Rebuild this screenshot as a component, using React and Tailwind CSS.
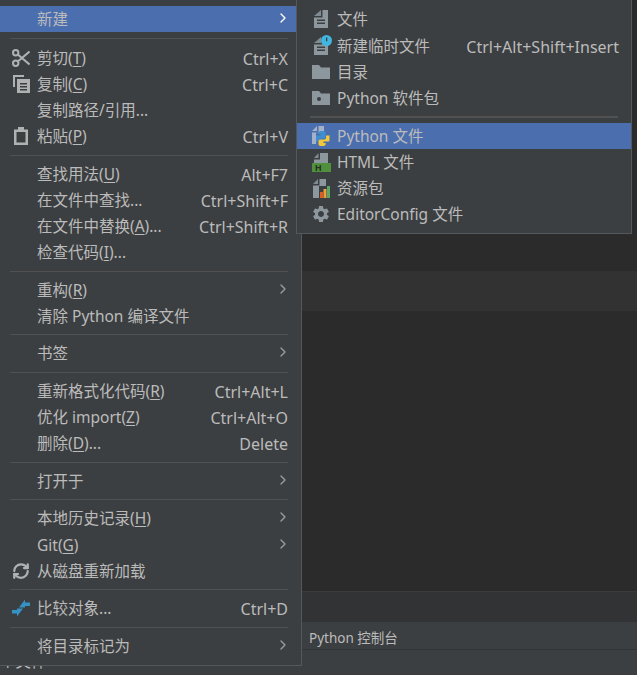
import React from "react";
import { ChevronRight, RefreshCw } from "lucide-react";
import { MdSettings } from "react-icons/md";

const font = `"Noto Sans", "Noto Sans CJK SC", sans-serif`;

const ScissorsIcon = () => (
  <svg width="18" height="18" viewBox="0 0 18 18" fill="none" stroke="#afb1b3" strokeWidth="2">
    <circle cx="3.7" cy="3.7" r="2.7" />
    <circle cx="3.7" cy="14.3" r="2.7" />
    <path d="M5.800 5.400 17.500 15.500M5.800 12.600 17.500 2.500" />
  </svg>
);

const CopyIcon = () => (
  <svg width="17" height="18" viewBox="0 0 17 18">
    <path d="M0 0h11v2H2v10H0z" fill="#afb1b3" />
    <path d="M4 4h13v14H4z" fill="#afb1b3" />
    <path d="M7 8h7v1.500H7zM7 11h7v1.500H7zM7 14h7v1.500H7z" fill="#3c3f41" />
  </svg>
);

const PasteIcon = () => (
  <svg width="14" height="18" viewBox="0 0 14 18">
    <path fillRule="evenodd" d="M0 2.500h4V0h6v2.500h4V18H0zM2.500 5v10.500h9V5z" fill="#afb1b3" />
  </svg>
);

const CompareIcon = () => (
  <svg width="18" height="18" viewBox="0 0 18 18" fill="#3592c4">
    <path d="M7 8.500 13 .5V3.500H18V7H13V8.500Z" />
    <path d="M11 9.500 5 17.500V14.500H0V11H5V9.500Z" />
  </svg>
);

const FileIcon = () => (
  <svg width="14" height="18" viewBox="0 0 14 18">
    <path d="M7 0v6H0z" fill="#7f8b91" />
    <path d="M8.500 0H14v18H0V7.500h8.500z" fill="#8d979e" />
    <path d="M3 9.500h8V11H3zM3 12.500h8V14H3z" fill="#3c3f41" />
  </svg>
);

const TempFileIcon = () => (
  <span className="relative flex">
    <FileIcon />
    <svg className="absolute left-[7px] top-[-2px]" width="11" height="11" viewBox="0 0 11 11">
      <circle cx="5.500" cy="5.500" r="5.500" fill="#40b6e0" />
      <path d="M5 2.500h1.300v3.800H5z" fill="#3c3f41" />
    </svg>
  </span>
);

const FolderIcon = ({ dot }) => (
  <svg width="18" height="14" viewBox="0 0 18 14">
    <path d="M0 0h7l2 2.500h9V14H0z" fill="#8d979e" />
    {dot && <circle cx="7" cy="8" r="2" fill="#3c3f41" />}
  </svg>
);

const PythonIcon = () => (
  <svg width="18" height="20" viewBox="0 0 18 20">
    <path d="M5 0v5H0z" fill="#a3b2c9" />
    <path d="M6.500 0H12v6H6a2 2 0 0 0-2 2v10H0V6.500h6.500z" fill="#a3b2c9" />
    <path d="M4 17V9.500h4.500V8H6.500V6.800C6.500 5.500 8 5 10 5s3.500.500 3.500 1.800V11c0 1-.8 1.500-1.800 1.500H8c-1 0-1.600.700-1.600 1.700V15H5z" fill="#3f8fd0" />
    <path d="M17.500 9.500V14c0 1-.7 1.500-1.500 1.500h-4.500V17h2.200v1.200c0 1.300-1.700 1.800-3.700 1.800s-3.500-.500-3.500-1.800V15c0-1 .8-1.500 1.800-1.500h4c1.100 0 1.700-.700 1.700-1.700V9.500z" fill="#f2c83a" />
  </svg>
);

const HtmlIcon = () => (
  <svg width="19" height="19" viewBox="0 0 19 19">
    <path d="M6.500 0v5H2z" fill="#7f8b91" />
    <path d="M8 0H16v10H2V6.500h6z" fill="#8d979e" />
    <path d="M0 10h19v9H0z" fill="#4f8f3e" />
    <text x="3" y="18" fontSize="9" fontWeight="700" fontFamily="Liberation Sans" fill="#22301f">H</text>
  </svg>
);

const ResourceIcon = () => (
  <svg width="17" height="19" viewBox="0 0 17 19">
    <path d="M5 0v5H0z" fill="#7f8b91" />
    <path d="M6.500 0H13v7H6v12H0V6.500h6.500z" fill="#8d979e" />
    <path d="M7 13h3v6H7z" fill="#e05a24" />
    <path d="M10.500 10h3v9h-3z" fill="#e8a33d" />
    <path d="M14 7h3v12h-3z" fill="#59a869" />
  </svg>
);

const GearIcon = () => <MdSettings size={20} color="#8d979e" />;

const u = (s) => <u className="underline underline-offset-2">{s}</u>;

const mainMenu = [
  { label: "新建", arrow: true, active: true },
  { sep: "h-[13px]" },
  { icon: <ScissorsIcon />, label: <>剪切({u("T")})</>, shortcut: "Ctrl+X" },
  { icon: <CopyIcon />, label: <>复制({u("C")})</>, shortcut: "Ctrl+C" },
  { label: "复制路径/引用..." },
  { icon: <PasteIcon />, label: <>粘贴({u("P")})</>, shortcut: "Ctrl+V" },
  { sep: "h-[12px]" },
  { label: <>查找用法({u("U")})</>, shortcut: "Alt+F7" },
  { label: "在文件中查找...", shortcut: "Ctrl+Shift+F" },
  { label: <>在文件中替换({u("A")})...</>, shortcut: "Ctrl+Shift+R" },
  { label: <>检查代码({u("I")})...</> },
  { sep: "h-[12px]" },
  { label: <>重构({u("R")})</>, arrow: true },
  { label: "清除 Python 编译文件" },
  { sep: "h-[11px]" },
  { label: "书签", arrow: true },
  { sep: "h-[12px]" },
  { label: <>重新格式化代码({u("R")})</>, shortcut: "Ctrl+Alt+L" },
  { label: <>优化 import({u("Z")})</>, shortcut: "Ctrl+Alt+O" },
  { label: <>删除({u("D")})...</>, shortcut: "Delete" },
  { sep: "h-[12px]" },
  { label: "打开于", arrow: true },
  { sep: "h-[11px]" },
  { label: <>本地历史记录({u("H")})</>, arrow: true },
  { label: <>Git({u("G")})</>, arrow: true, tall: true },
  { icon: <RefreshCw size={18} color="#afb1b3" strokeWidth={3} />, label: "从磁盘重新加载" },
  { sep: "h-[11px]" },
  { icon: <CompareIcon />, label: "比较对象...", shortcut: "Ctrl+D" },
  { sep: "h-[12px]" },
  { label: "将目录标记为", arrow: true },
];

const subMenu = [
  { icon: <FileIcon />, label: "文件" },
  { icon: <TempFileIcon />, label: "新建临时文件", shortcut: "Ctrl+Alt+Shift+Insert", tall: true },
  { icon: <FolderIcon />, label: "目录" },
  { icon: <FolderIcon dot />, label: "Python 软件包" },
  { sep: "h-[12px]" },
  { icon: <PythonIcon />, label: "Python 文件", active: true },
  { icon: <HtmlIcon />, label: "HTML 文件" },
  { icon: <ResourceIcon />, label: "资源包" },
  { icon: <GearIcon />, label: "EditorConfig 文件" },
];

const Row = ({ item, slot, rowPad }) => (
  <div
    className={`flex items-center ${item.tall ? "h-[27px]" : "h-[26px]"} ${rowPad} ${
      item.active ? "bg-[#4b6eaf]" : ""
    }`}
  >
    {slot(item.icon)}
    <span className="flex-1 whitespace-nowrap pt-[2px]">{item.label}</span>
    {item.shortcut && <span className="whitespace-nowrap pt-[2px] text-[16px]">{item.shortcut}</span>}
    {item.arrow && (
      <ChevronRight
        size={16}
        strokeWidth={2}
        className={`-mr-[3px] -mt-[2px] ${item.active ? "text-white" : "text-[#9a9da0]"}`}
      />
    )}
  </div>
);

const mainSlot = (icon) => (
  <span className="flex h-full w-[37px] shrink-0 items-center justify-center pl-[5px]">{icon}</span>
);

const subSlot = (icon) => (
  <span className="flex h-full w-[40px] shrink-0 items-center justify-center pl-[8px]">{icon}</span>
);

export default function App() {
  return (
    <div
      className="relative flex h-[675px] w-[637px] flex-col overflow-hidden bg-[#3c3f41] text-[15.5px] text-[#bbbbbb]"
      style={{ fontFamily: font }}
    >
      {/* ide behind the menus */}
      <div className="h-[591px] shrink-0 bg-[#2b2b2b] pt-[271px]">
        <div className="h-[40px] bg-[#323232]" />
      </div>
      <div className="h-[31px] shrink-0 border-t border-[#393b3d] bg-[#313335]" />
      <div className="flex h-[28px] shrink-0 items-center border-b border-[#323537] pl-[309px] pt-[5px] text-[13.5px]">
        Python 控制台
      </div>
      <div className="shrink-0 leading-[22px]">个文件</div>

      {/* main context menu */}
      <div className="absolute left-0 top-0 w-[302px] border-b border-r border-[#55585a] bg-[#3c3f41] pb-[6px] pt-[6px]">
        {mainMenu.map((item, i) =>
          item.sep ? (
            <div key={i} className={`flex items-center pl-[10px] pr-[13px] ${item.sep}`}>
              <div className="h-px w-full bg-[#515151]" />
            </div>
          ) : (
            <Row key={i} item={item} slot={mainSlot} rowPad="pr-[13px]" />
          ),
        )}
      </div>

      {/* new submenu */}
      <div className="absolute left-[296px] top-0 w-[336px] border-x border-b border-[#55585a] bg-[#3c3f41] pb-[6px] pt-[6px]">
        {subMenu.map((item, i) =>
          item.sep ? (
            <div key={i} className={`flex items-center px-[13px] ${item.sep}`}>
              <div className="h-[2px] w-full bg-[#515151]" />
            </div>
          ) : (
            <Row key={i} item={item} slot={subSlot} rowPad="pr-[12px]" />
          ),
        )}
      </div>
    </div>
  );
}
